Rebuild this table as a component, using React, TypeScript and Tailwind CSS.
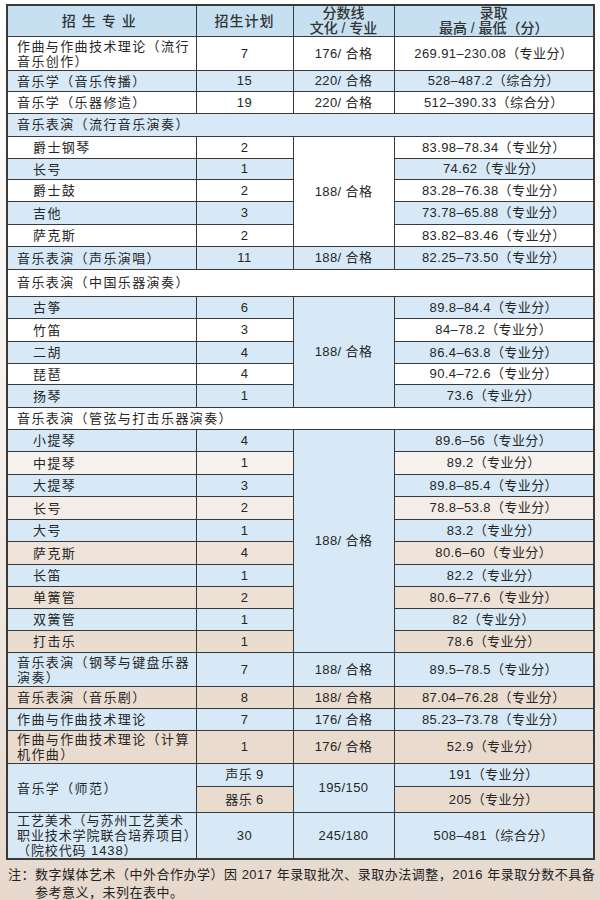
import React from "react";

const font = "font-['Liberation_Sans','Noto_Sans_CJK_SC',sans-serif]";

type Row = {
  name: string;
  plan: string;
  score: string;
  bg: string;
  h: string;
};

const popular: Row[] = [
  { name: "爵士钢琴", plan: "2", score: "83.98–78.34（专业分）", bg: "bg-white", h: "h-[22px]" },
  { name: "长号", plan: "1", score: "74.62（专业分）", bg: "bg-[#d7e9f6]", h: "h-[21px]" },
  { name: "爵士鼓", plan: "2", score: "83.28–76.38（专业分）", bg: "bg-white", h: "h-[22px]" },
  { name: "吉他", plan: "3", score: "73.78–65.88（专业分）", bg: "bg-[#d7e9f6]", h: "h-[23px]" },
  { name: "萨克斯", plan: "2", score: "83.82–83.46（专业分）", bg: "bg-white", h: "h-[22px]" },
];

const chinese: Row[] = [
  { name: "古筝", plan: "6", score: "89.8–84.4（专业分）", bg: "bg-[#d7e9f6]", h: "h-[22px]" },
  { name: "竹笛", plan: "3", score: "84–78.2（专业分）", bg: "bg-white", h: "h-[23px]" },
  { name: "二胡", plan: "4", score: "86.4–63.8（专业分）", bg: "bg-[#d7e9f6]", h: "h-[22px]" },
  { name: "琵琶", plan: "4", score: "90.4–72.6（专业分）", bg: "bg-white", h: "h-[21px]" },
  { name: "扬琴", plan: "1", score: "73.6（专业分）", bg: "bg-[#d7e9f6]", h: "h-[23px]" },
];

const orchestra: Row[] = [
  { name: "小提琴", plan: "4", score: "89.6–56（专业分）", bg: "bg-[#d7e9f6]", h: "h-[22px]" },
  { name: "中提琴", plan: "1", score: "89.2（专业分）", bg: "bg-[#f7f2ee]", h: "h-[23px]" },
  { name: "大提琴", plan: "3", score: "89.8–85.4（专业分）", bg: "bg-[#d7e9f6]", h: "h-[22px]" },
  { name: "长号", plan: "2", score: "78.8–53.8（专业分）", bg: "bg-[#f4ece6]", h: "h-[23px]" },
  { name: "大号", plan: "1", score: "83.2（专业分）", bg: "bg-[#d7e9f6]", h: "h-[22px]" },
  { name: "萨克斯", plan: "4", score: "80.6–60（专业分）", bg: "bg-[#efe3da]", h: "h-[23px]" },
  { name: "长笛", plan: "1", score: "82.2（专业分）", bg: "bg-[#d7e9f6]", h: "h-[22px]" },
  { name: "单簧管", plan: "2", score: "80.6–77.6（专业分）", bg: "bg-[#ede0d5]", h: "h-[22px]" },
  { name: "双簧管", plan: "1", score: "82（专业分）", bg: "bg-[#d7e9f6]", h: "h-[22px]" },
  { name: "打击乐", plan: "1", score: "78.6（专业分）", bg: "bg-[#ebdcd0]", h: "h-[22px]" },
];

const td = "border border-[#3a3a3a] p-0 align-middle";

// explicit line breaks in names, so wrapping matches the print
function NameCell({ lines, sub, rowSpan }: { lines: string[]; sub?: boolean; rowSpan?: number }) {
  return (
    <td
      rowSpan={rowSpan}
      className={`${td} text-left leading-[15px] tracking-[1.4px] whitespace-nowrap ${sub ? "pl-[25px]" : "pl-[9px]"}`}
    >
      {lines.map((l, i) => (
        <div key={i}>{l}</div>
      ))}
    </td>
  );
}

function C({ children, className = "", rowSpan }: { children?: React.ReactNode; className?: string; rowSpan?: number }) {
  return (
    <td rowSpan={rowSpan} className={`${td} text-center tracking-[0.4px] ${className}`}>
      {children}
    </td>
  );
}

function Group({ title, titleBg, rows, lineBg, titleH }: { title: string; titleBg: string; rows: Row[]; lineBg: string; titleH: string }) {
  return (
    <>
      <tr className={`${titleH} ${titleBg}`}>
        <td colSpan={4} className={`${td} pl-[9px] text-left tracking-[1.4px]`}>
          {title}
        </td>
      </tr>
      {rows.map((r, i) => (
        <tr key={r.name + i} className={`${r.h} ${r.bg}`}>
          <NameCell lines={[r.name]} sub />
          <C>{r.plan}</C>
          {i === 0 && (
            <C rowSpan={rows.length} className={lineBg}>
              188/ 合格
            </C>
          )}
          <C>{r.score}</C>
        </tr>
      ))}
    </>
  );
}

export default function App() {
  return (
    <div className={`${font} relative w-[600px] h-[900px] overflow-hidden bg-gradient-to-b from-white via-[#f6f0eb] to-[#e6d8cc] text-[13px] text-[#262626]`}>
      <div className="pt-[4px] pl-[6px]">
        <table className="w-[587px] table-fixed border-collapse border-2 border-[#3a3a3a]">
          <colgroup>
            <col className="w-[189px]" />
            <col className="w-[97px]" />
            <col className="w-[101px]" />
            <col className="w-[200px]" />
          </colgroup>
          <tbody>
            <tr className="h-[31px] bg-[#c6e0f2] text-[14px] font-medium text-[#333]">
              <td className={`${td} text-center tracking-[6px]`}>招生专业</td>
              <td className={`${td} text-center tracking-[1px]`}>招生计划</td>
              <td className={`${td} text-center leading-[15px]`}>
                分数线
                <br />
                文化 / 专业
              </td>
              <td className={`${td} text-center leading-[15px]`}>
                录取
                <br />
                最高 / 最低（分）
              </td>
            </tr>

            <tr className="h-[34px] bg-white">
              <NameCell lines={["作曲与作曲技术理论（流行", "音乐创作）"]} />
              <C>7</C>
              <C>176/ 合格</C>
              <C>269.91–230.08（专业分）</C>
            </tr>
            <tr className="h-[21px] bg-[#d7e9f6]">
              <NameCell lines={["音乐学（音乐传播）"]} />
              <C>15</C>
              <C>220/ 合格</C>
              <C>528–487.2（综合分）</C>
            </tr>
            <tr className="h-[22px] bg-white">
              <NameCell lines={["音乐学（乐器修造）"]} />
              <C>19</C>
              <C>220/ 合格</C>
              <C>512–390.33（综合分）</C>
            </tr>

            <Group title="音乐表演（流行音乐演奏）" titleBg="bg-[#d7e9f6]" titleH="h-[23px]" rows={popular} lineBg="bg-white" />

            <tr className="h-[23px] bg-[#d7e9f6]">
              <NameCell lines={["音乐表演（声乐演唱）"]} />
              <C>11</C>
              <C>188/ 合格</C>
              <C>82.25–73.50（专业分）</C>
            </tr>

            <Group title="音乐表演（中国乐器演奏）" titleBg="bg-white" titleH="h-[27px]" rows={chinese} lineBg="bg-[#d7e9f6]" />

            <Group title="音乐表演（管弦与打击乐器演奏）" titleBg="bg-white" titleH="h-[22px]" rows={orchestra} lineBg="bg-[#d7e9f6]" />

            <tr className="h-[34px] bg-[#d7e9f6]">
              <NameCell lines={["音乐表演（钢琴与键盘乐器", "演奏）"]} />
              <C>7</C>
              <C>188/ 合格</C>
              <C>89.5–78.5（专业分）</C>
            </tr>
            <tr className="h-[22px] bg-[#ebdcd0]">
              <NameCell lines={["音乐表演（音乐剧）"]} />
              <C>8</C>
              <C>188/ 合格</C>
              <C>87.04–76.28（专业分）</C>
            </tr>
            <tr className="h-[22px] bg-[#d7e9f6]">
              <NameCell lines={["作曲与作曲技术理论"]} />
              <C>7</C>
              <C>176/ 合格</C>
              <C>85.23–73.78（专业分）</C>
            </tr>
            <tr className="h-[33px] bg-[#eadbcf]">
              <NameCell lines={["作曲与作曲技术理论（计算", "机作曲）"]} />
              <C>1</C>
              <C>176/ 合格</C>
              <C>52.9（专业分）</C>
            </tr>
            <tr className="h-[23px] bg-[#d7e9f6]">
              <NameCell rowSpan={2} lines={["音乐学（师范）"]} />
              <C>声乐 9</C>
              <C rowSpan={2}>195/150</C>
              <C>191（专业分）</C>
            </tr>
            <tr className="h-[26px] bg-[#eadbcf]">
              <C>器乐 6</C>
              <C>205（专业分）</C>
            </tr>
            <tr className="h-[46px] bg-[#d7e9f6]">
              <td className={`${td} pl-[9px] text-left leading-[15px] tracking-[0.9px] whitespace-nowrap`}>
                <div>工艺美术（与苏州工艺美术</div>
                <div>职业技术学院联合培养项目）</div>
                <div>（院校代码 1438）</div>
              </td>
              <C>30</C>
              <C>245/180</C>
              <C>508–481（综合分）</C>
            </tr>
          </tbody>
        </table>
      </div>

      <div className="mt-[6px] pl-[8px] text-[13px] leading-[18px] tracking-[0.5px] text-[#222] whitespace-nowrap">
        <div className="flex">
          <span className="shrink-0">注：</span>
          <span>
            数字媒体艺术（中外合作办学）因 2017 年录取批次、录取办法调整，2016 年录取分数不具备
            <br />
            参考意义，未列在表中。
          </span>
        </div>
      </div>
    </div>
  );
}
